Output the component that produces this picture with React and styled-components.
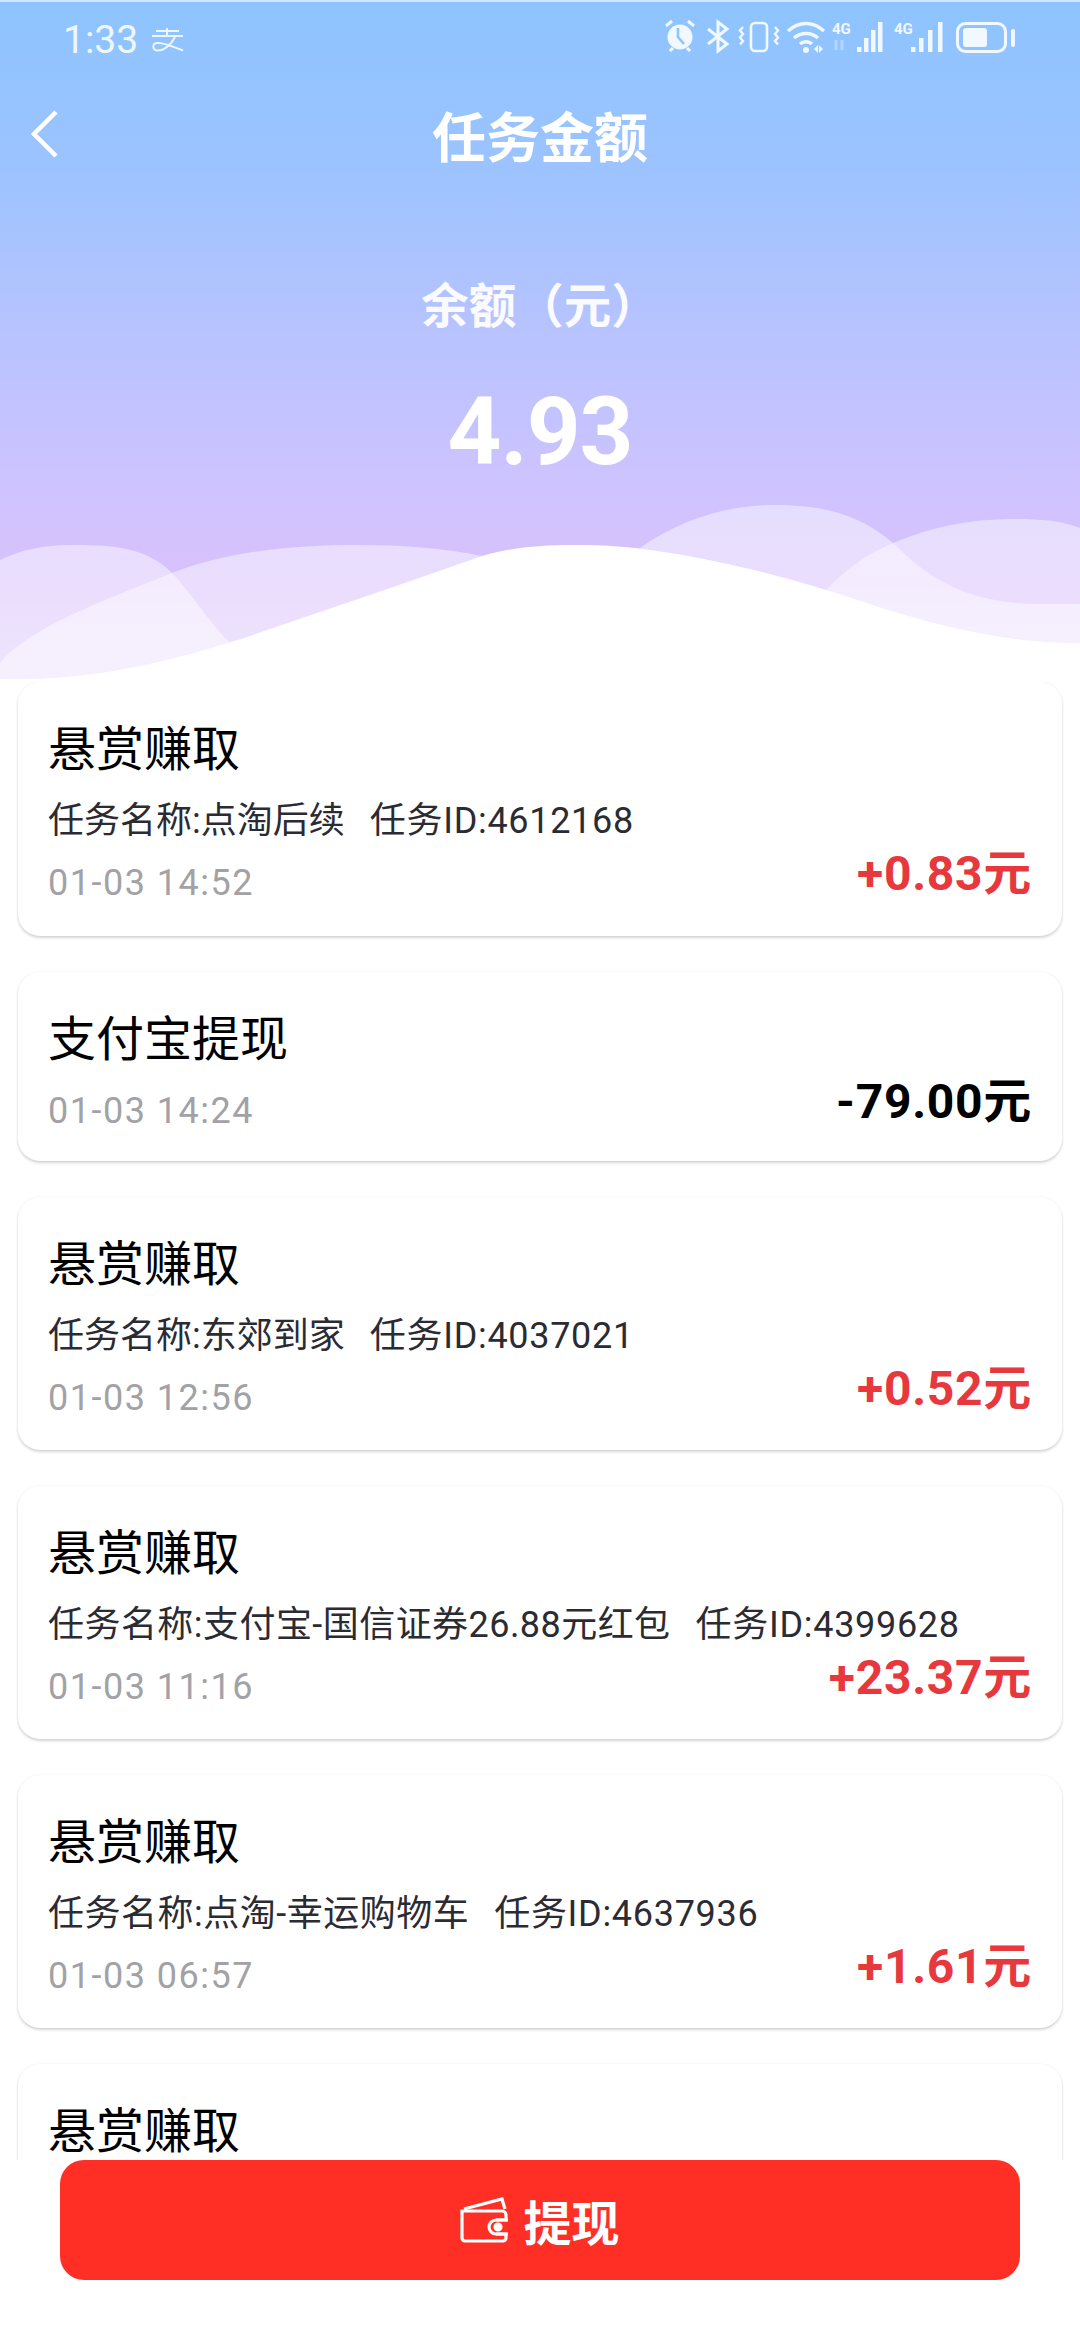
import React from "react";
import styled, { createGlobalStyle } from "styled-components";

const Global = createGlobalStyle`
  html, body { margin: 0; padding: 0; background: #fff; }
  #root { width: 1080px; height: 2340px; }
  * { box-sizing: border-box; }
`;

const FONT = `Roboto, "Noto Sans CJK SC", sans-serif`;
const CJK = `"Noto Sans CJK SC", sans-serif`;

const Page = styled.div`
  width: 1080px;
  height: 2340px;
  display: flex;
  flex-direction: column;
  overflow: hidden;
  background: #fff;
  font-family: ${FONT};
`;

const Hero = styled.header`
  position: relative;
  height: 682px;
  flex: none;
  display: flex;
  flex-direction: column;
  align-items: center;
  color: #fff;
  background: linear-gradient(180deg, #8dc4ff 0%, #9cc3ff 24%, #b4c3ff 45%, #cfc3ff 72%, #d9c1fb 86%, #e2cffc 100%);
  border-top: 2px solid #cfe6ff;
`;

const WaveArt = styled.svg`
  position: absolute;
  left: 0;
  bottom: 0;
  width: 1080px;
  height: 682px;
  display: block;
`;

const StatusBar = styled.div`
  width: 100%;
  height: 70px;
  padding: 0 64px 0 63px;
  display: flex;
  align-items: center;
  justify-content: space-between;
  position: relative;
  z-index: 1;
`;

const StatusLeft = styled.div`
  display: flex;
  align-items: center;
  gap: 14px;
  margin-top: 6px;
`;

const Clock = styled.span`
  font: 400 39px/1 Roboto, sans-serif;
  color: #eef7ff;
`;

const NavBar = styled.div`
  width: 100%;
  height: 130px;
  padding-bottom: 4px;
  position: relative;
  z-index: 1;
  display: flex;
  align-items: center;
  justify-content: center;
`;

const BackIcon = styled.svg`
  position: absolute;
  left: 31px;
  top: 38px;
`;

const Title = styled.h1`
  margin: 0;
  font: 700 54px/1 ${CJK};
  color: #fff;
`;

const BalanceLabel = styled.div`
  position: relative;
  z-index: 1;
  margin-top: 77px;
  font: 700 47.500px/48px ${CJK};
  color: #fbfaff;
`;

const BalanceValue = styled.div`
  position: relative;
  z-index: 1;
  margin-top: 58px;
  font: 700 94px/1 Roboto, sans-serif;
  letter-spacing: -1px;
  color: #fff;
`;

const List = styled.main`
  flex: 1;
  min-height: 0;
  overflow: hidden;
  padding: 0 18px 0;
  display: flex;
  flex-direction: column;
  gap: 36px;
`;

const Card = styled.article`
  flex: none;
  height: ${(p) => p.$h}px;
  border-radius: 22px;
  background: #fff;
  padding: 32px 30px 0 30px;
  box-shadow: 0 2px 3px rgba(0, 0, 0, 0.16), 0 0 3px rgba(0, 0, 0, 0.05);
`;

const CardTitle = styled.div`
  font: 400 48px/62px ${CJK};
  color: #000;
  height: 62px;
`;

const Detail = styled.div`
  margin-top: 21px;
  font: 400 36px/48px ${FONT};
  color: #2b2b33;
  display: flex;
  gap: 25px;
  white-space: nowrap;
`;

const TaskName = styled.span`
  letter-spacing: ${(p) => p.$ls}px;
`;

const TaskId = styled.span`
  letter-spacing: 0.7px;
`;

const Footerline = styled.div`
  display: flex;
  justify-content: space-between;
  align-items: flex-end;
  margin-top: ${(p) => p.$mt}px;
`;

const DateText = styled.span`
  font: 400 36px/44px ${FONT};
  letter-spacing: 1.5px;
  color: #a2a2a6;
`;

const Amount = styled.span`
  font: 700 48px/52px Roboto, ${CJK};
  letter-spacing: 0.7px;
  color: ${(p) => (p.$neg ? "#000" : "#e7383e")};
  position: relative;
  top: -5px;
`;

const Footer = styled.footer`
  flex: none;
  height: 180px;
  padding: 0 60px 60px;
  background: #fff;
  position: relative;
  z-index: 2;
`;

const WithdrawButton = styled.button`
  width: 100%;
  height: 120px;
  border: 0;
  border-radius: 24px;
  background: #ff2f26;
  color: #fff;
  display: flex;
  align-items: center;
  justify-content: center;
  gap: 13px;
  font: 700 48px/1 ${CJK};
`;

const records = [
  { title: "悬赏赚取", name: "点淘后续", ls: 0, id: "4612168", date: "01-03 14:52", amount: "+0.83元", h: 254 },
  { title: "支付宝提现", date: "01-03 14:24", amount: "-79.00元", neg: true, h: 189 },
  { title: "悬赏赚取", name: "东郊到家", ls: 0, id: "4037021", date: "01-03 12:56", amount: "+0.52元", h: 253 },
  { title: "悬赏赚取", name: "支付宝-国信证券26.88元红包", ls: 0.45, id: "4399628", date: "01-03 11:16", amount: "+23.37元", h: 253 },
  { title: "悬赏赚取", name: "点淘-幸运购物车", ls: 0.5, id: "4637936", date: "01-03 06:57", amount: "+1.61元", h: 253 },
  { title: "悬赏赚取", h: 253 },
];

const AlipayGlyph = () => (
  <svg width="32" height="24" viewBox="0 0 32 24" fill="none" stroke="#eef7ff" strokeWidth="2" aria-hidden>
    <path d="M4 3h23M15 0v8M0 8h31" />
    <path d="M23 9C19 17 12 22.500 6 22.500C0 22.500 0 15 5 15C11 14 22 19 31 22.500" />
  </svg>
);

const StatusIcons = () => (
  <svg width="352" height="40" viewBox="0 0 352 40" fill="none" aria-hidden>
    <circle cx="16" cy="20" r="12.5" fill="#f2f8ff" />
    <path d="M14 11v9l6 7" stroke="#8fc3ff" strokeWidth="2.6" />
    <path d="M2 9l6-5M30 9l-6-5M6 34l3-3M26 34l-3-3" stroke="#f2f8ff" strokeWidth="3" />
    <path d="M44 12l19 15-9 7V5l9 7-19 15" stroke="#f2f8ff" strokeWidth="3" />
    <rect x="87" y="6" width="16" height="28" rx="4" stroke="#f2f8ff" strokeWidth="2.6" />
    <path d="M79 10l-3 3.500 3 3.500-3 3.500 3 3.500-3 3.500M111 10l3 3.500-3 3.500 3 3.500-3 3.500 3 3.500" stroke="#f2f8ff" strokeWidth="2.4" />
    <path d="M124 14c11-10 25-10 36 0M130 21c7-6 17-6 24 0M136 27c3-3 9-3 12 0" stroke="#f2f8ff" strokeWidth="3.4" />
    <circle cx="142" cy="33" r="3" fill="#f2f8ff" />
    <path d="M150 32l4-4v8zM155 28l4 4-4 4z" fill="#f2f8ff" />
    <text x="168" y="17" fontFamily="Roboto, sans-serif" fontWeight="700" fontSize="15" fill="#f2f8ff">4G</text>
    <path d="M172 23v10M178 23v10" stroke="#f2f8ff" strokeOpacity=".35" strokeWidth="3" />
    <g fill="#f2f8ff">
      <rect x="193" y="30" width="4.500" height="5" />
      <rect x="200" y="21" width="4.500" height="14" />
      <rect x="207" y="13" width="4.500" height="22" />
      <rect x="214" y="5" width="4.500" height="30" />
    </g>
    <text x="230" y="17" fontFamily="Roboto, sans-serif" fontWeight="700" fontSize="15" fill="#f2f8ff">4G</text>
    <g fill="#f2f8ff">
      <rect x="247" y="30" width="4.500" height="5" />
      <rect x="255" y="21" width="4.500" height="14" />
      <rect x="264" y="13" width="4.500" height="22" />
      <rect x="274" y="5" width="4.500" height="30" />
    </g>
    <rect x="293.500" y="6.500" width="48" height="28" rx="8" stroke="#f2f8ff" strokeWidth="3" />
    <rect x="299" y="11" width="24" height="19" rx="3" fill="#f2f8ff" />
    <rect x="347" y="12" width="4" height="18" rx="2" fill="#f2f8ff" />
  </svg>
);

const Waves = () => (
  <WaveArt viewBox="0 0 1080 682" aria-hidden>
    <g fill="#fff" fillOpacity="0.46">
      <path d="M0 560C20 550 45 545 69 545C105 545 145 545 172 573C195 597 220 640 241 650V682H0Z" />
      <path d="M0 663C28 628 105 600 172 573C230 550 300 545 358 545C400 545 445 548 482 556L500 682H0Z" />
      <path d="M640 548C680 520 725 505 775 505C825 505 860 515 893 543C930 580 970 604 1040 604L1080 604V682H640Z" />
      <path d="M826 590C845 570 865 555 893 543C930 527 970 519 1012 519C1040 519 1060 520 1080 528V682H826Z" />
    </g>
    <path
      fill="#fff"
      d="M0 679C70 681 140 671 241 639C320 612 400 585 482 556C520 545 555 545 585 545C650 545 745 565 826 590C880 606 970 643 1080 643V682H0Z"
    />
  </WaveArt>
);

const WalletIcon = () => (
  <svg width="50" height="46" viewBox="0 0 50 46" fill="none" stroke="#fff" strokeWidth="3.2" aria-hidden>
    <path d="M2 14h40a4 4 0 0 1 4 4v5H36a7 7 0 0 0 0 14h10v4a3 3 0 0 1-3 3H5a3 3 0 0 1-3-3V14Z" />
    <path d="M4 12 42 2l3 10" />
    <circle cx="38" cy="30" r="3" fill="#fff" />
    <path d="M36 23h12M36 37h12" />
  </svg>
);

export default function App() {
  return (
    <Page>
      <Global />
      <Hero>
        <Waves />
        <StatusBar>
          <StatusLeft>
            <Clock>1:33</Clock>
            <AlipayGlyph />
          </StatusLeft>
          <StatusIcons />
        </StatusBar>
        <NavBar>
          <BackIcon width="28" height="48" viewBox="0 0 28 48" fill="none" stroke="#fff" strokeWidth="4.5" aria-hidden>
            <path d="M25 2 3 24l22 22" />
          </BackIcon>
          <Title>任务金额</Title>
        </NavBar>
        <BalanceLabel>余额（元）</BalanceLabel>
        <BalanceValue>4.93</BalanceValue>
      </Hero>
      <List>
        {records.map((r, i) => (
          <Card key={i} $h={r.h}>
            <CardTitle>{r.title}</CardTitle>
            {r.name && (
              <Detail>
                <TaskName $ls={r.ls}>任务名称:{r.name}</TaskName>
                <TaskId>任务ID:{r.id}</TaskId>
              </Detail>
            )}
            {r.date && (
              <Footerline $mt={r.name ? 8 : 15}>
                <DateText>{r.date}</DateText>
                <Amount $neg={r.neg}>{r.amount}</Amount>
              </Footerline>
            )}
          </Card>
        ))}
      </List>
      <Footer>
        <WithdrawButton>
          <WalletIcon />
          提现
        </WithdrawButton>
      </Footer>
    </Page>
  );
}
